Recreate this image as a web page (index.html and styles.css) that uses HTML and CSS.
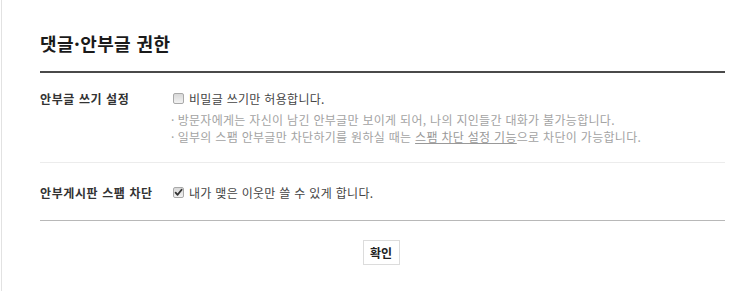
FILE: index.html
```html
<!DOCTYPE html>
<html lang="ko">
<head>
<meta charset="utf-8">
<link rel="stylesheet" href="styles.css">
</head>
<body>
<div class="panel">
  <h2 class="title">댓글·안부글 권한</h2>
  <div class="row row-first">
    <div class="label">안부글 쓰기 설정</div>
    <div class="field">
      <div class="option"><span class="box"></span><span>비밀글 쓰기만 허용합니다.</span></div>
      <ul class="desc">
        <li>방문자에게는 자신이 남긴 안부글만 보이게 되어, 나의 지인들간 대화가 불가능합니다.</li>
        <li>일부의 스팸 안부글만 차단하기를 원하실 때는 <a class="link">스팸 차단 설정 기능</a>으로 차단이 가능합니다.</li>
      </ul>
    </div>
  </div>
  <div class="row row-last">
    <div class="label">안부게시판 스팸 차단</div>
    <div class="field">
      <div class="option"><span class="box checked"><svg viewBox="0 0 11 11" width="11" height="11"><path d="M2.6 5.6 L4.6 7.8 L8.6 2.8" fill="none" stroke="#333" stroke-width="1.8" stroke-linecap="round" stroke-linejoin="round"/></svg></span><span>내가 맺은 이웃만 쓸 수 있게 합니다.</span></div>
    </div>
  </div>
  <div class="actions">
    <button class="btn">확인</button>
  </div>
</div>
</body>
</html>
```
FILE: styles.css
```css
html, body {
  margin: 0;
  padding: 0;
  background: #fff;
}
body {
  padding-left: 1px;
  font-family: "Noto Sans CJK KR", "Noto Sans", sans-serif;
  color: #333;
}
.panel {
  border-left: 1px solid #e2e2e2;
  padding: 31px 18px 24px 38px;
  min-height: 236px;
}
.title {
  margin: 0;
  font-size: 18px;
  line-height: 24px;
  font-weight: bold;
  color: #1a1a1a;
  padding-bottom: 16px;
  border-bottom: 2px solid #4a4a4a;
  letter-spacing: 0.4px;
}
.row {
  display: flex;
  font-size: 12px;
  line-height: 17px;
}
.row-first {
  padding: 17px 0 17px;
  border-bottom: 1px solid #ececec;
}
.row-last {
  padding: 21px 0 19px;
  border-bottom: 1px solid #b8b8b8;
}
.label {
  width: 133px;
  flex: none;
  font-weight: bold;
  color: #333;
  letter-spacing: 0.6px;
}
.field {
  flex: 1;
}
.option {
  display: flex;
  align-items: center;
  gap: 5px;
  color: #444;
  letter-spacing: 0.3px;
}
.box {
  width: 9px;
  height: 9px;
  border: 1px solid #a9a9a9;
  border-radius: 2px;
  background: linear-gradient(#d8d8d8, #f2f2f2);
  position: relative;
  flex: none;
}
.box svg {
  position: absolute;
  left: -1px;
  top: -1px;
}
.desc {
  list-style: none;
  margin: 4px 0 0 -2px;
  padding: 0;
  color: #a3a3a3;
  font-size: 12px;
  letter-spacing: 0.3px;
}
.desc li::before {
  content: "·";
  margin-right: 3px;
}
.link {
  color: #999;
  text-decoration: underline;
}
.actions {
  display: flex;
  justify-content: center;
  padding-top: 19px;
  padding-right: 3px;
}
.btn {
  width: 37px;
  height: 25px;
  padding: 0;
  border: 1px solid #dcdcdc;
  background: #fff;
  font-family: "Noto Sans CJK KR", sans-serif;
  font-size: 12px;
  font-weight: bold;
  color: #222;
}
```
